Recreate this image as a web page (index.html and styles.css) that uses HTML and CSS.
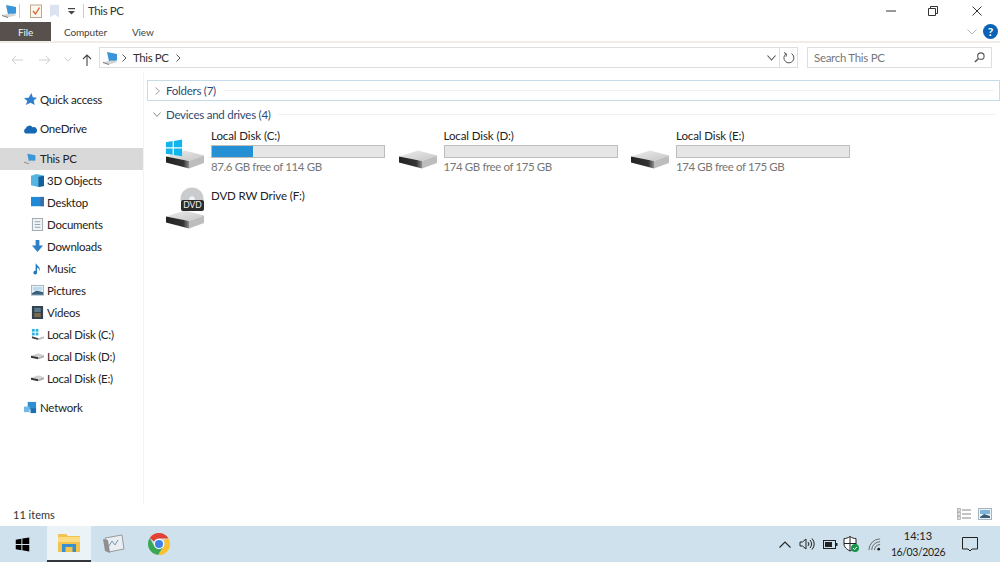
FILE: index.html
```html
<!DOCTYPE html>
<html lang="en">
<head>
<meta charset="utf-8">
<title>This PC</title>
<link rel="stylesheet" href="styles.css">
</head>
<body>
<svg class="defs" width="0" height="0">
  <defs>
    <linearGradient id="top" x1="0" y1="0" x2="1" y2="1"><stop offset="0" stop-color="#ececec"/><stop offset="1" stop-color="#c6c6c6"/></linearGradient>
    <linearGradient id="front" x1="0" y1="0" x2="1" y2="0"><stop offset="0" stop-color="#222"/><stop offset=".75" stop-color="#333"/><stop offset="1" stop-color="#8c8c8c"/></linearGradient>
    <symbol id="drive" viewBox="0 0 38 20">
      <path d="M0 6.500 L19 .5 L38 5.500 L23 11 Z" fill="url(#top)"/>
      <path d="M23 11 L38 5.500 V13 L23 18.500 Z" fill="#bdbdbd"/>
      <path d="M0 6.500 L23 11 V18.500 L0 12.500 Z" fill="url(#front)"/>
    </symbol>
    <symbol id="win" viewBox="0 0 20 20">
      <path d="M1 3.500 L8.500 2.300 V9.300 H1 Z M9.800 2.100 L19 .6 V9.300 H9.800 Z M1 10.500 H8.500 V17.600 L1 16.400 Z M9.800 10.500 H19 V19.300 L9.800 17.800 Z" fill="currentColor"/>
    </symbol>
    <symbol id="pc" viewBox="0 0 16 16">
      <path d="M4 2 L14 4 V10.500 L6 11.500 Z" fill="#3a96d8"/>
      <path d="M0 12 L9 10.500 L15 12 L6 14.500 Z" fill="#d4d4d4"/>
      <path d="M0 12 L6 14 V15 L0 13 Z" fill="#777"/>
    </symbol>
    <symbol id="mini" viewBox="0 0 16 8">
      <path d="M0 3 L9 0 L16 2.500 L7 5 Z" fill="#cfcfcf"/>
      <path d="M0 3 L9 5 V7.500 L0 5.500 Z" fill="#333"/>
      <path d="M9 5 L16 2.500 V5 L9 7.500 Z" fill="#aaa"/>
    </symbol>
  </defs>
</svg>

<div class="window">
  <header class="titlebar">
    <svg class="qa-pc" viewBox="0 0 16 16"><use href="#pc"/></svg>
    <span class="qa-sep"></span>
    <svg class="qa-check" viewBox="0 0 12 14"><rect x=".5" y="1" width="11" height="12.500" fill="#fdf6ec" stroke="#b9a78e"/><path d="M3 7 L5.500 10 L9.500 3.500" fill="none" stroke="#d4622c" stroke-width="1.300"/></svg>
    <svg class="qa-folder" viewBox="0 0 10 14"><path d="M0 0 H10 V14 L5 11 L0 14 Z" fill="#dbe3f2"/></svg>
    <svg class="qa-down" viewBox="0 0 7 7"><rect x="0" y="0" width="7" height="1.200" fill="#444"/><path d="M0 3 H7 L3.500 6.500 Z" fill="#444"/></svg>
    <span class="qa-bar"></span>
    <span class="title">This PC</span>
    <div class="win-controls">
      <svg class="wc wc-min" viewBox="0 0 10 10"><path d="M0 5 H10" stroke="#333" stroke-width="1"/></svg>
      <svg class="wc wc-max" viewBox="0 0 10 10"><path d="M.5 2.500 H7.500 V9.500 H.5 Z M2.500 2.500 V.5 H9.500 V7.500 H7.500" fill="none" stroke="#333"/></svg>
      <svg class="wc wc-close" viewBox="0 0 10 10"><path d="M.5 .5 L9.500 9.500 M9.500 .5 L.5 9.500" stroke="#333" stroke-width="1"/></svg>
    </div>
  </header>

  <nav class="ribbon">
    <span class="tab tab-file">File</span>
    <span class="tab tab-computer">Computer</span>
    <span class="tab tab-view">View</span>
    <svg class="rb-chevron" viewBox="0 0 10 6"><path d="M.5 .5 L5 5 L9.500 .5" fill="none" stroke="#b5b5b5"/></svg>
    <span class="help">?</span>
  </nav>

  <div class="addressrow">
    <div class="navbtns">
      <svg class="nv nv-back" viewBox="0 0 12 10"><path d="M12 5 H1 M5 1 L1 5 L5 9" fill="none" stroke="#d0d0d0"/></svg>
      <svg class="nv nv-fwd" viewBox="0 0 12 10"><path d="M0 5 H11 M7 1 L11 5 L7 9" fill="none" stroke="#d0d0d0"/></svg>
      <svg class="nv nv-rec" viewBox="0 0 8 5"><path d="M.5 .5 L4 4 L7.500 .5" fill="none" stroke="#d0d0d0"/></svg>
      <svg class="nv nv-up" viewBox="0 0 10 12"><path d="M5 12 V1 M1 5 L5 1 L9 5" fill="none" stroke="#444" stroke-width="1.100"/></svg>
    </div>
    <div class="addressbox">
      <svg class="ab-pc" viewBox="0 0 16 16"><use href="#pc"/></svg>
      <svg class="ab-sep" viewBox="0 0 5 8"><path d="M.5 .5 L4 4 L.5 7.500" fill="none" stroke="#555"/></svg>
      <span class="ab-text">This PC</span>
      <svg class="ab-sep ab-sep2" viewBox="0 0 5 8"><path d="M.5 .5 L4 4 L.5 7.500" fill="none" stroke="#555"/></svg>
      <svg class="ab-drop" viewBox="0 0 9 6"><path d="M.5 .5 L4.500 5 L8.500 .5" fill="none" stroke="#555" stroke-width="1.100"/></svg>
      <span class="ab-div"></span>
      <svg class="ab-refresh" viewBox="0 0 12 12"><path d="M3 1.800 A5 5 0 1 0 8.500 1.600 M1 .5 L3.500 2 L3 4.700" fill="none" stroke="#555" stroke-width="1"/></svg>
    </div>
    <div class="searchbox">
      <span class="search-text">Search This PC</span>
      <svg class="search-icon" viewBox="0 0 12 12"><circle cx="7.500" cy="4.500" r="3.500" fill="none" stroke="#555" stroke-width="1.200"/><path d="M5 7 L1 11" stroke="#555" stroke-width="1.600"/></svg>
    </div>
  </div>

  <div class="body">
    <aside class="sidebar">
      <div class="nav-row top"><svg class="ni" viewBox="0 0 14 14"><path d="M8 0 L9.500 4.500 L14 5 L10.500 8 L11.500 13 L7 10.500 L2 13 L3.500 8.500 L0 5.500 L5 5 Z" fill="#2f7fd0"/></svg>Quick access</div>
      <div class="nav-row top"><svg class="ni ni-wide" viewBox="0 0 16 10"><path d="M3 10 A3 3 0 0 1 3 4.500 A4.500 4.500 0 0 1 11 3 A3.500 3.500 0 0 1 13.500 10 Z" fill="#1668b5"/></svg>OneDrive</div>
      <div class="nav-group">
        <div class="nav-row top selected"><svg class="ni" viewBox="0 0 16 16"><use href="#pc"/></svg>This PC</div>
        <div class="nav-row sub"><svg class="ni" viewBox="0 0 14 14"><path d="M0 2 L6 0 L14 2 V13 L8 14 L0 12 Z" fill="#55b5e0"/><path d="M8 3 L14 2 V13 L8 14 Z" fill="#155f9c"/></svg>3D Objects</div>
        <div class="nav-row sub"><svg class="ni" viewBox="0 0 14 14"><rect y="1" width="14" height="10" fill="#1e8ad6"/><rect x="10" y="1" width="4" height="10" fill="#3b6ea5"/></svg>Desktop</div>
        <div class="nav-row sub"><svg class="ni" viewBox="0 0 14 14"><rect x="1.500" y=".5" width="11" height="13" fill="#f2f2f2" stroke="#9aa5ad"/><path d="M4 4 H10 M4 7 H10 M4 10 H10" stroke="#8aa3b8"/></svg>Documents</div>
        <div class="nav-row sub"><svg class="ni" viewBox="0 0 14 14"><path d="M5 0 H9 V6 H13 L7 13 L1 6 H5 Z" fill="#2f7fc8"/></svg>Downloads</div>
        <div class="nav-row sub"><svg class="ni" viewBox="0 0 14 14"><path d="M5 1 C6 4 11 5 9 10 C9 7 7.500 6.500 6.500 6 V11 A2 2 0 1 1 5 9.500 Z" fill="#1d77c0"/></svg>Music</div>
        <div class="nav-row sub"><svg class="ni" viewBox="0 0 14 14"><rect x=".5" y="1.500" width="13" height="10.500" fill="#eef2f5" stroke="#a8b2ba"/><path d="M1 10 L6 7 L13 9 V11.500 H1 Z" fill="#35607f"/><rect x="2" y="3" width="10" height="4" fill="#bcdcf0"/></svg>Pictures</div>
        <div class="nav-row sub"><svg class="ni" viewBox="0 0 14 14"><rect x="1" y="0" width="12" height="14" fill="#31414f"/><rect x="3.500" y="2" width="7" height="4.500" fill="#5b7a8a"/><rect x="3.500" y="7.500" width="7" height="4.500" fill="#7c6a4a"/></svg>Videos</div>
        <div class="nav-row sub"><svg class="ni" viewBox="0 0 14 14"><rect x="1" y="1" width="3" height="3" fill="#2fb4e0"/><rect x="5" y="1" width="3" height="3" fill="#2fb4e0"/><rect x="1" y="5" width="3" height="3" fill="#2fb4e0"/><rect x="5" y="5" width="3" height="3" fill="#2fb4e0"/><path d="M1 9 L8 11 V13 L1 11 Z" fill="#444"/><path d="M8 11 L14 9 V11 L8 13 Z" fill="#bbb"/></svg>Local Disk (C:)</div>
        <div class="nav-row sub"><svg class="ni ni-mini" viewBox="0 0 16 8"><use href="#mini"/></svg>Local Disk (D:)</div>
        <div class="nav-row sub"><svg class="ni ni-mini" viewBox="0 0 16 8"><use href="#mini"/></svg>Local Disk (E:)</div>
      </div>
      <div class="nav-row top"><svg class="ni" viewBox="0 0 14 14"><rect x="4" y="1" width="9" height="8" fill="#2f8fd0"/><rect x="0" y="6" width="6" height="6" fill="#6fb9e5"/><rect x="7" y="8" width="6" height="5" fill="#1d6fb0"/></svg>Network</div>
    </aside>

    <main class="content">
      <div class="group-head folders">
        <svg class="gh-chev" viewBox="0 0 5 8"><path d="M.5 .5 L4.500 4 L.5 7.500" fill="none" stroke="#a0a0a0"/></svg>
        <span class="gh-label">Folders (7)</span>
        <span class="gh-line"></span>
      </div>
      <div class="group-head devices">
        <svg class="gh-chev gh-open" viewBox="0 0 8 5"><path d="M.5 .5 L4 4.500 L7.500 .5" fill="none" stroke="#8a8a8a"/></svg>
        <span class="gh-label">Devices and drives (4)</span>
        <span class="gh-line"></span>
      </div>
      <div class="tiles">
        <div class="tile">
          <div class="tile-icon">
            <svg class="bigdrive" viewBox="0 0 38 20"><use href="#drive"/></svg>
            <svg class="badge-win" viewBox="0 0 20 20"><use href="#win"/></svg>
          </div>
          <div class="tile-info">
            <div class="tile-name">Local Disk (C:)</div>
            <div class="bar"><div class="bar-fill"></div></div>
            <div class="tile-sub">87.6 GB free of 114 GB</div>
          </div>
        </div>
        <div class="tile">
          <div class="tile-icon"><svg class="bigdrive" viewBox="0 0 38 20"><use href="#drive"/></svg></div>
          <div class="tile-info">
            <div class="tile-name">Local Disk (D:)</div>
            <div class="bar"></div>
            <div class="tile-sub">174 GB free of 175 GB</div>
          </div>
        </div>
        <div class="tile">
          <div class="tile-icon"><svg class="bigdrive" viewBox="0 0 38 20"><use href="#drive"/></svg></div>
          <div class="tile-info">
            <div class="tile-name">Local Disk (E:)</div>
            <div class="bar"></div>
            <div class="tile-sub">174 GB free of 175 GB</div>
          </div>
        </div>
        <div class="tile">
          <div class="tile-icon">
            <svg class="bigdrive" viewBox="0 0 38 20"><use href="#drive"/></svg>
            <svg class="disc" viewBox="0 0 26 26"><circle cx="13" cy="13" r="12.500" fill="#c9cccf"/><circle cx="13" cy="13" r="3" fill="#f2f2f2"/></svg>
            <span class="dvd">DVD</span>
          </div>
          <div class="tile-info">
            <div class="tile-name">DVD RW Drive (F:)</div>
          </div>
        </div>
      </div>
    </main>
  </div>

  <footer class="statusbar">
    <span>11 items</span>
    <div class="views">
      <svg class="vw" viewBox="0 0 14 12"><rect x=".5" y=".5" width="3" height="3" fill="#ddd" stroke="#999" stroke-width=".6"/><rect x=".5" y="4.500" width="3" height="3" fill="#ddd" stroke="#999" stroke-width=".6"/><rect x=".5" y="8.500" width="3" height="3" fill="#ddd" stroke="#999" stroke-width=".6"/><path d="M5 2 H14 M5 6 H14 M5 10 H14" stroke="#888"/></svg>
      <svg class="vw" viewBox="0 0 14 12"><rect x=".5" y=".5" width="13" height="11" fill="#eef3f7" stroke="#a5b4bf"/><rect x="2" y="2" width="10" height="4" fill="#7fb5d8"/><path d="M2 9 L6 6 L12 8 V10 H2 Z" fill="#3a5f78"/></svg>
    </div>
  </footer>
</div>

<div class="taskbar">
  <div class="tb-btn"><svg class="tb-win" viewBox="0 0 20 20"><use href="#win"/></svg></div>
  <div class="tb-btn active">
    <svg class="tb-ic" viewBox="0 0 22 20"><path d="M0 1 H8 L10 3 H22 V19 H0 Z" fill="#f3c34f"/><rect x="0" y="4" width="22" height="5" fill="#fbdc82"/><path d="M4 19 V11 H18 V19 H14.500 V14 H7.500 V19 Z" fill="#3a8fcf"/></svg>
  </div>
  <div class="tb-btn">
    <svg class="tb-ic" viewBox="0 0 22 20"><path d="M2 4 L19 1 L21 15 L6 18 Z" fill="#e8eef2" stroke="#9a9a9a"/><path d="M6 12 L9 7 L12 11 L15 6" fill="none" stroke="#7a95a8"/><path d="M0 5 L5 6 L7 19 L2 17 Z" fill="#8f8f8f"/></svg>
  </div>
  <div class="tb-btn">
    <svg class="tb-ic tb-chrome" viewBox="0 0 22 22">
      <path d="M11 0 A11 11 0 0 1 20.500 5.500 H11 A5.500 5.500 0 0 0 6 8.500 L1.800 5 A11 11 0 0 1 11 0 Z" fill="#e34133"/>
      <path d="M20.500 5.500 A11 11 0 0 1 10 22 L14.800 14.500 A5.500 5.500 0 0 0 15.500 7 Z" fill="#fbc02d"/>
      <path d="M10 22 A11 11 0 0 1 1.800 5 L6.500 13.500 A5.500 5.500 0 0 0 14.800 14.500 Z" fill="#3aa757"/>
      <circle cx="11" cy="11" r="5" fill="#fff"/><circle cx="11" cy="11" r="4" fill="#3f7fe8"/>
    </svg>
  </div>
  <div class="tray">
    <svg class="tr tr-up" viewBox="0 0 12 7"><path d="M.5 6.500 L6 1 L11.500 6.500" fill="none" stroke="#222" stroke-width="1.100"/></svg>
    <svg class="tr tr-vol" viewBox="0 0 16 14"><path d="M1 5 H3.500 L7 2 V12 L3.500 9 H1 Z M9 5 A3 3 0 0 1 9 9 M11 3 A6 6 0 0 1 11 11 M13 1.500 A8 8 0 0 1 13 12.500" fill="none" stroke="#222"/></svg>
    <svg class="tr tr-bat" viewBox="0 0 15 9"><rect x=".5" y=".5" width="12" height="8" fill="none" stroke="#222"/><rect x="2" y="2" width="7" height="5" fill="#222"/><rect x="13" y="3" width="1.500" height="3" fill="#222"/></svg>
    <svg class="tr tr-shield" viewBox="0 0 16 16"><path d="M7 .5 C9 2 11 2.500 13 2.500 V8 C13 11 10 13.500 7 15 C4 13.500 1 11 1 8 V2.500 C3 2.500 5 2 7 .5 Z M7 .5 V15 M1 7.500 H13" fill="#fff" stroke="#222"/><circle cx="12" cy="12" r="4" fill="#14964a"/><path d="M10 12 L11.500 13.500 L14 10.800" fill="none" stroke="#fff"/></svg>
    <svg class="tr tr-wifi" viewBox="0 0 14 14"><path d="M1 13 A12 12 0 0 1 13 1 M4 13 A9 9 0 0 1 13 4 M7 13 A6 6 0 0 1 13 7" fill="none" stroke="#666"/><circle cx="11.500" cy="12" r="1.500" fill="#222"/></svg>
    <div class="clock"><span>14:13</span><span class="clock-date">16/03/2026</span></div>
    <svg class="tr tr-note" viewBox="0 0 16 15"><path d="M.5 .5 H15.500 V12 H10 L8 14 L6 12 H.5 Z" fill="none" stroke="#222"/></svg>
  </div>
</div>
</body>
</html>
```

FILE: styles.css
```css
* { box-sizing: border-box; }
html, body { margin: 0; padding: 0; }
body {
  width: 1000px;
  height: 562px;
  overflow: hidden;
  background: #fff;
  font-family: Lato, "Open Sans", "Liberation Sans", sans-serif;
  font-size: 11.500px;
  color: #222;
  display: flex;
  flex-direction: column;
}
svg { display: block; flex: none; }
.defs { position: absolute; }

.window { flex: 1; display: flex; flex-direction: column; min-height: 0; }

/* title bar */
.titlebar { height: 22px; display: flex; align-items: center; flex: none; }
.qa-pc { width: 16px; height: 16px; margin-left: 2px; }
.qa-sep { width: 1px; height: 14px; background: #ccc; margin-left: 1px; }
.qa-check { width: 12px; height: 14px; margin-left: 10px; }
.qa-folder { width: 9px; height: 14px; margin-left: 8px; }
.qa-down { width: 7px; height: 7px; margin-left: 9px; }
.qa-bar { width: 1px; height: 14px; background: #ccc; margin-left: 8px; }
.title { margin-left: 4px; padding-bottom: 2px; font-size: 11.500px; letter-spacing: -.4px; color: #333; }
.win-controls { margin-left: auto; display: flex; align-items: center; }
.wc { width: 10px; height: 10px; }
.wc-min { margin-right: 32px; }
.wc-max { margin-right: 34px; }
.wc-close { margin-right: 18px; }

/* ribbon tabs */
.ribbon {
  height: 21px;
  display: flex;
  align-items: center;
  flex: none;
  border-bottom: 2px solid #f1ece6;
}
.tab { font-size: 10px; letter-spacing: -.15px; color: #444; }
.tab-file {
  width: 51px;
  height: 19px;
  background: #58504c;
  color: #f2f2f2;
  display: flex;
  align-items: center;
  justify-content: center;
}
.tab-computer { margin-left: 13px; }
.tab-view { margin-left: 25px; }
.rb-chevron { width: 10px; height: 6px; margin-left: auto; }
.help {
  width: 15px;
  height: 15px;
  border-radius: 50%;
  background: #0a63b4;
  color: #fff;
  font-size: 12px;
  font-weight: 700;
  display: flex;
  align-items: center;
  justify-content: center;
  margin: 0 2px 0 6px;
}

/* address row */
.addressrow { height: 25px; margin-top: 4px; display: flex; flex: none; align-items: stretch; }
.navbtns { width: 99px; display: flex; align-items: center; flex: none; }
.nv-back { width: 12px; height: 10px; margin-left: 11px; }
.nv-fwd { width: 12px; height: 10px; margin-left: 16px; }
.nv-rec { width: 8px; height: 5px; margin-left: 13px; }
.nv-up { width: 10px; height: 12px; margin-left: 10px; }
.addressbox {
  width: 699px;
  height: 21px;
  border: 1px solid #dedede;
  display: flex;
  align-items: center;
  flex: none;
}
.ab-pc { width: 16px; height: 16px; margin-left: 3px; }
.ab-sep { width: 5px; height: 8px; margin-left: 3px; }
.ab-sep2 { margin-left: 7px; }
.ab-text { margin-left: 6px; font-size: 11.500px; letter-spacing: -.4px; color: #333; }
.ab-drop { width: 9px; height: 6px; margin-left: auto; }
.ab-div { width: 1px; height: 19px; background: #dedede; margin-left: 3px; }
.ab-refresh { width: 12px; height: 12px; margin: 0 2px 0 3px; }
.searchbox {
  width: 185px;
  height: 21px;
  margin-left: 9px;
  border: 1px solid #dedede;
  display: flex;
  align-items: center;
  justify-content: space-between;
  padding: 0 6px;
  flex: none;
}
.search-text { color: #777; font-size: 11.500px; letter-spacing: -.3px; }
.search-icon { width: 11px; height: 11px; }

/* main area */
.body { flex: 1; display: flex; min-height: 0; }
.sidebar {
  width: 144px;
  flex: none;
  padding-top: 17px;
  display: flex;
  flex-direction: column;
  gap: 7.500px;
  border-right: 1px solid #f3f3f3;
}
.nav-row { height: 22px; padding-bottom: 2px; display: flex; align-items: center; font-size: 11.500px; letter-spacing: -.25px; color: #222; white-space: nowrap; }
.nav-row.top { padding-left: 24px; }
.nav-row.top .ni { margin-right: 3px; }
.nav-row.sub { padding-left: 31px; }
.nav-row.sub .ni { margin-right: 3px; }
.nav-row.selected { background: #d9d9d9; }
.ni { width: 13px; height: 13px; }
.ni-wide { width: 14px; height: 10px; margin-left: -1px; }
.ni-mini { width: 13px; height: 7px; }
.nav-group { display: flex; flex-direction: column; }

.content { flex: 1; padding: 8px 0 0 3px; min-width: 0; }
.group-head { display: flex; align-items: center; }
.folders { height: 21px; border: 1px solid #c6dce8; padding-left: 7px; }
.devices { height: 20px; margin-top: 4px; padding-left: 6px; padding-bottom: 2px; }
.gh-chev { width: 5px; height: 8px; }
.gh-open { width: 8px; height: 5px; }
.gh-label { margin-left: 6px; font-size: 11.500px; letter-spacing: -.25px; color: #2f4a72; white-space: nowrap; }
.devices .gh-label { margin-left: 5px; }
.gh-line { flex: 1; height: 1px; background: #eef1f4; margin: 0 5px 0 7px; }

.tiles {
  margin-top: 2px;
  margin-left: 17px;
  display: grid;
  grid-template-columns: repeat(3, 232.500px);
  grid-auto-rows: 60px;
}
.tile { display: flex; }
.tile-icon { width: 47px; height: 60px; position: relative; flex: none; }
.bigdrive { position: absolute; left: 2px; top: 23px; width: 38px; height: 20px; }
.badge-win { position: absolute; left: 1px; top: 12px; width: 18px; height: 18px; color: #12b4ee; }
.disc { position: absolute; left: 16px; top: 0; width: 24px; height: 24px; }
.dvd {
  position: absolute;
  left: 17px;
  top: 13px;
  width: 23px;
  height: 11px;
  background: #2b2b2b;
  color: #eee;
  font-size: 8.500px;
  line-height: 11px;
  text-align: center;
  border-radius: 2px;
}
.tile-info { width: 174px; padding-top: 2px; }
.tile-name { font-size: 11.500px; letter-spacing: -.1px; height: 16px; line-height: 13px; color: #222; white-space: nowrap; }
.bar { height: 13px; border: 1px solid #bcbcbc; background: #e6e6e6; }
.bar-fill { width: 24%; height: 100%; background: #2690d4; }
.tile-sub { font-size: 11.500px; letter-spacing: -.4px; color: #777; margin-top: 1px; line-height: 16px; white-space: nowrap; }

/* status bar */
.statusbar {
  height: 22px;
  flex: none;
  display: flex;
  align-items: center;
  justify-content: space-between;
  padding: 0 8px 2px 13px;
  font-size: 11px;
  color: #333;
}
.views { display: flex; gap: 7px; }
.vw { width: 14px; height: 12px; }

/* taskbar */
.taskbar {
  height: 36px;
  flex: none;
  background: #cfe1ec;
  display: flex;
  align-items: stretch;
}
.tb-btn { width: 44px; display: flex; align-items: center; justify-content: center; flex: none; margin-right: 1px; }
.tb-btn:first-child { width: 47px; margin-right: 0; padding-right: 3px; }
.tb-btn.active { background: #ebf3f7; border-bottom: 2px solid #33363a; }
.tb-win { width: 15px; height: 15px; color: #000; }
.tb-ic { width: 22px; height: 20px; }
.tb-chrome { height: 22px; }
.tray { margin-left: auto; display: flex; align-items: center; color: #222; }
.tr-up { width: 12px; height: 7px; margin-right: 8px; }
.tr-vol { width: 16px; height: 14px; margin-right: 7.500px; }
.tr-bat { width: 15px; height: 9px; margin-right: 5.500px; }
.tr-shield { width: 16px; height: 16px; margin-right: 8.500px; }
.tr-wifi { width: 13px; height: 13px; margin-right: 9.500px; }
.clock {
  display: flex;
  flex-direction: column;
  align-items: center;
  font-size: 11px;
  line-height: 16px;
  width: 56px;
  color: #222;
}
.clock-date { font-size: 10.500px; letter-spacing: -.4px; }
.tr-note { width: 16px; height: 15px; margin: 0 22px 0 16px; }
```
